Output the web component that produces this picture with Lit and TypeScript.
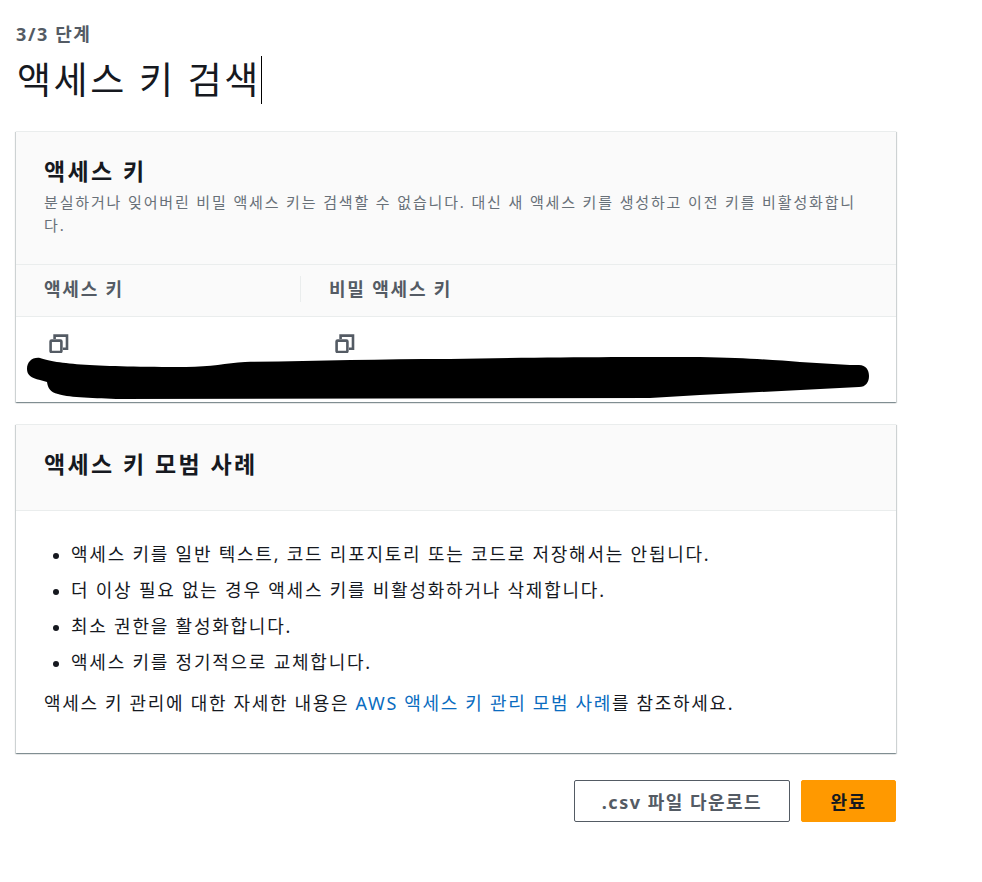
import { LitElement, html, css } from "lit";
import { customElement } from "lit/decorators.js";

const copyIcon = html`<svg class="copy" viewBox="0 0 20 20" width="20" height="20" fill="none" stroke="#545b64" stroke-width="2.6">
  <rect x="1.6" y="7.6" width="10.8" height="11.4" rx="1"></rect>
  <path d="M5.6 6V2.6H18V15.7H14"></path>
</svg>`;

@customElement("app-root")
export class AppRoot extends LitElement {
  static styles = css`
    :host {
      display: block;
      position: relative;
      height: 882px;
      background: #fff;
      color: #16191f;
      font-family: "Noto Sans", "Noto Sans CJK KR", sans-serif;
      font-size: 16px;
    }
    .page {
      width: 880px;
      margin-left: 16px;
      padding-top: 22px;
      display: flex;
      flex-direction: column;
    }
    .step {
      font-size: 18px;
      font-weight: 700;
      line-height: 24px;
      letter-spacing: 1.6px;
      color: #545b64;
    }
    .title-row {
      display: flex;
      align-items: center;
      height: 48px;
      margin-top: 10px;
      padding-left: 1px;
    }
    h1 {
      margin: 0;
      font-size: 37px;
      font-weight: 400;
      line-height: 48px;
      letter-spacing: 2.55px;
      color: #16191f;
    }
    .caret {
      width: 1px;
      height: 48px;
      background: #000;
    }
    .card {
      background: #fff;
      box-shadow: 0 1px 1px 0 rgba(0, 28, 36, 0.3), 1px 1px 1px 0 rgba(0, 28, 36, 0.15), -1px 1px 1px 0 rgba(0, 28, 36, 0.15);
      border-top: 1px solid #eaeded;
    }
    .keys {
      position: relative;
      margin-top: 27px;
      height: 270px;
    }
    .head {
      background: #fafafa;
      padding: 24px 28px 0;
      height: 133px;
      box-sizing: border-box;
      border-bottom: 1px solid #eaeded;
    }
    h2 {
      margin: 0;
      font-size: 23px;
      line-height: 30px;
      font-weight: 700;
      letter-spacing: 2.4px;
      color: #16191f;
    }
    .desc {
      margin: 5px 0 0;
      font-size: 15px;
      line-height: 23px;
      letter-spacing: 1.85px;
      color: #687078;
    }
    .thead {
      display: grid;
      grid-template-columns: 284px 1fr;
      background: #fafafa;
      height: 52px;
      box-sizing: border-box;
      padding-bottom: 4px;
      border-bottom: 1px solid #eaeded;
      align-items: center;
      font-size: 18px;
      font-weight: 700;
      letter-spacing: 1.8px;
      color: #545b64;
    }
    .th {
      padding-left: 28px;
      line-height: 26px;
    }
    .th + .th {
      border-left: 1px solid #eaeded;
    }
    .tbody {
      display: grid;
      grid-template-columns: 285px 1fr;
      padding-top: 16px;
    }
    .td {
      padding-left: 33px;
    }
    .td + .td {
      padding-left: 34px;
    }
    .copy {
      display: block;
    }
    .scribble {
      position: absolute;
      left: 0;
      top: 0;
      width: 100%;
      height: 100%;
      pointer-events: none;
    }
    .practice {
      margin-top: 22px;
      height: 329px;
      box-sizing: border-box;
    }
    .practice .head {
      height: 86px;
    }
    .body {
      padding: 25px 28px 0;
      font-size: 18px;
      line-height: 36px;
      letter-spacing: 1.77px;
    }
    ul {
      margin: 0;
      padding: 0 0 0 27px;
    }
    li::marker {
      font-size: 16px;
    }
    p.more {
      margin: 5px 0 0;
      letter-spacing: 1.67px;
    }
    a {
      color: #0a6cc0;
      text-decoration: none;
    }
    .actions {
      display: flex;
      justify-content: flex-end;
      gap: 11px;
      margin-top: 27px;
    }
    button {
      height: 42px;
      box-sizing: border-box;
      border-radius: 2px;
      font: inherit;
      font-size: 18px;
      font-weight: 700;
      letter-spacing: 1.5px;
      padding: 0;
    }
    .secondary {
      width: 216px;
      background: #fff;
      border: 1px solid #545b64;
      color: #545b64;
    }
    .primary {
      width: 95px;
      background: #ff9900;
      border: 1px solid #ff9900;
      color: #16191f;
    }
  `;

  render() {
    return html`
      <div class="page">
        <div class="step">3/3 단계</div>
        <div class="title-row"><h1>액세스 키 검색</h1><span class="caret"></span></div>
        <section class="card keys">
          <div class="head">
            <h2>액세스 키</h2>
            <p class="desc">분실하거나 잊어버린 비밀 액세스 키는 검색할 수 없습니다. 대신 새 액세스 키를 생성하고 이전 키를 비활성화합니다.</p>
          </div>
          <div class="thead">
            <div class="th">액세스 키</div>
            <div class="th">비밀 액세스 키</div>
          </div>
          <div class="tbody">
            <div class="td">${copyIcon}</div>
            <div class="td">${copyIcon}</div>
          </div>
          <svg class="scribble" viewBox="0 0 880 270">
            <path fill="#000" d="M11 237 C11 230 16 225 24 226 C40 232 80 235 170 235 C195 235 210 231 229 230 C300 229 360 227 434 227 C520 225 620 225 684 225 C730 226 760 228 784 230 L834 233 L843 233 C850 233 853 238 853 244 C853 250 850 255 843 255 L684 263 L634 266 L100 267 C74 266 50 265 42 262 C34 260 32 256 31 250 L24 248 C15 246 11 243 11 237 Z"></path>
          </svg>
        </section>
        <section class="card practice">
          <div class="head"><h2>액세스 키 모범 사례</h2></div>
          <div class="body">
            <ul>
              <li>액세스 키를 일반 텍스트, 코드 리포지토리 또는 코드로 저장해서는 안됩니다.</li>
              <li>더 이상 필요 없는 경우 액세스 키를 비활성화하거나 삭제합니다.</li>
              <li>최소 권한을 활성화합니다.</li>
              <li>액세스 키를 정기적으로 교체합니다.</li>
            </ul>
            <p class="more">액세스 키 관리에 대한 자세한 내용은 <a href="#">AWS 액세스 키 관리 모범 사례</a>를 참조하세요.</p>
          </div>
        </section>
        <div class="actions">
          <button class="secondary">.csv 파일 다운로드</button>
          <button class="primary">완료</button>
        </div>
      </div>
    `;
  }
}
